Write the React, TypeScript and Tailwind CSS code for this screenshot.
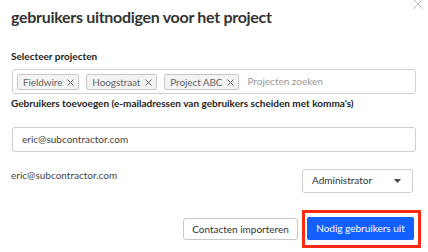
import React from "react";

function Tag({ label }: { label: string }) {
  return (
    <div className="flex h-[16px] items-center gap-[5px] rounded-[2px] border border-[#c8c8c8] bg-[#f3f3f3] pl-[5px] pr-[4px] text-[10px] leading-none tracking-[-0.1px] text-[#666]">
      <span>{label}</span>
      <svg width="7" height="7" viewBox="0 0 7 7" className="mt-[2px]">
        <path d="M0.5 0.5 L6.5 6.5 M6.5 0.5 L0.5 6.5" stroke="#666" strokeWidth="1" />
      </svg>
    </div>
  );
}

export default function App() {
  return (
    <div
      className="relative h-[252px] w-[428px] overflow-hidden bg-white text-[#333]"
      style={{ fontFamily: "Lato, 'Open Sans', sans-serif" }}
    >
      <button className="absolute left-[413px] top-[-1px]">
        <svg width="10" height="10" viewBox="0 0 10 10" className="block">
          <path d="M0 0 L10 10 M10 0 L0 10" stroke="#b8b8b8" strokeWidth="0.9" />
        </svg>
      </button>
      <div className="flex flex-col pl-[11px] pr-[12px]">
        <h1 className="mt-[7px] text-[16px] font-bold leading-[20px] tracking-[-0.3px] text-[#333]">
          gebruikers uitnodigen voor het project
        </h1>
        <label className="mt-[22px] text-[10px] font-bold leading-[14px] text-[#222]">Selecteer projecten</label>
        <div className="ml-[1px] mt-[6px] flex h-[25px] items-center gap-[7px] rounded-[3px] border border-[#cfcfcf] pl-[4px]">
          <Tag label="Fieldwire" />
          <Tag label="Hoogstraat" />
          <Tag label="Project ABC" />
          <span className="ml-[1px] text-[10px] text-[#9a9a9a]">Projecten zoeken</span>
        </div>
        <label className="mt-[2px] text-[10px] font-bold leading-[14px] text-[#222]">
          Gebruikers toevoegen (e-mailadressen van gebruikers scheiden met komma's)
        </label>
        <div className="ml-[1px] mt-[17px] flex h-[25px] items-center rounded-[3px] border border-[#cfcfcf] pl-[9px] text-[10px] text-[#444]">
          eric@subcontractor.com
        </div>
        <div className="mt-[16px] flex items-center justify-between pr-[3px]">
          <span className="mb-[10px] text-[10px] text-[#444]">eric@subcontractor.com</span>
          <div className="flex h-[24px] w-[111px] items-center justify-between rounded-[3px] border border-[#cfcfcf] pl-[9px] pr-[11px] text-[10px] text-[#333]">
            <span>Administrator</span>
            <svg width="7" height="4" viewBox="0 0 7 4">
              <path d="M0 0 L7 0 L3.5 4 Z" fill="#444" />
            </svg>
          </div>
        </div>
        <div className="mt-[17px] flex items-center justify-end gap-[4px] mr-[-5px]">
          <button className="h-[22px] w-[115px] rounded-[3px] border border-[#c8c8c8] bg-white text-[10px] text-[#333]">
            Contacten importeren
          </button>
          <div className="border-[3px] border-[#ff2a12] pb-[5px] pl-[2px] pr-[4px] pt-[4px]">
            <button className="block h-[23px] w-[107px] rounded-[2px] bg-[#1160ff] text-[10px] text-white">
              Nodig gebruikers uit
            </button>
          </div>
        </div>
      </div>
    </div>
  );
}
